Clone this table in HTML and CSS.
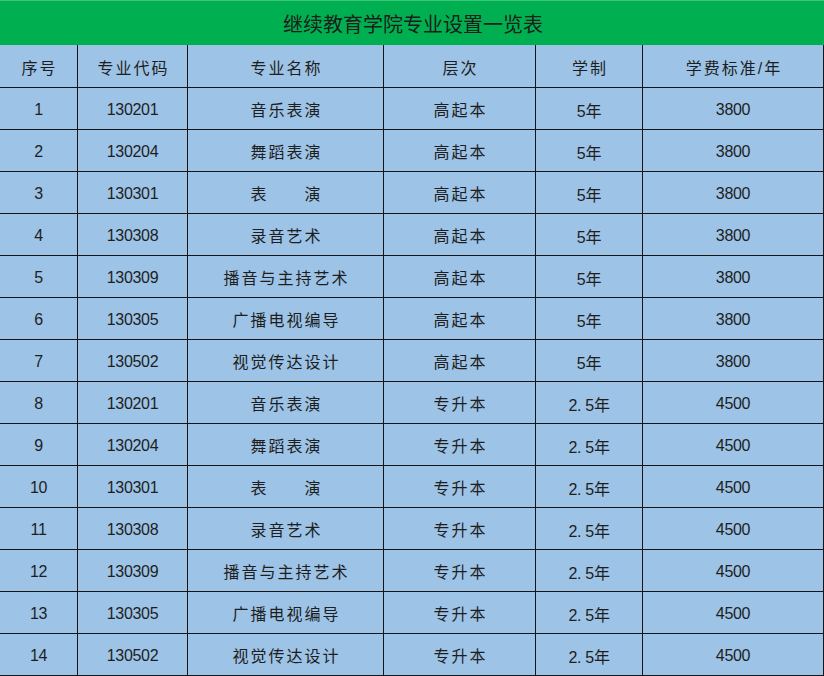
FILE: index.html
```html
<!DOCTYPE html>
<html lang="zh-CN">
<head>
<meta charset="utf-8">
<title>继续教育学院专业设置一览表</title>
<link rel="stylesheet" href="styles.css">
</head>
<body>
<div class="page">
  <div class="title">继续教育学院专业设置一览表</div>
  <div class="sheet">
    <div class="cell zh">序号</div>
    <div class="cell zh">专业代码</div>
    <div class="cell zh">专业名称</div>
    <div class="cell zh">层次</div>
    <div class="cell zh">学制</div>
    <div class="cell zh">学费标准/年</div>

    <div class="cell">1</div><div class="cell">130201</div><div class="cell zh">音乐表演</div><div class="cell zh">高起本</div><div class="cell">5年</div><div class="cell">3800</div>
    <div class="cell">2</div><div class="cell">130204</div><div class="cell zh">舞蹈表演</div><div class="cell zh">高起本</div><div class="cell">5年</div><div class="cell">3800</div>
    <div class="cell">3</div><div class="cell">130301</div><div class="cell zh">表　　演</div><div class="cell zh">高起本</div><div class="cell">5年</div><div class="cell">3800</div>
    <div class="cell">4</div><div class="cell">130308</div><div class="cell zh">录音艺术</div><div class="cell zh">高起本</div><div class="cell">5年</div><div class="cell">3800</div>
    <div class="cell">5</div><div class="cell">130309</div><div class="cell zh">播音与主持艺术</div><div class="cell zh">高起本</div><div class="cell">5年</div><div class="cell">3800</div>
    <div class="cell">6</div><div class="cell">130305</div><div class="cell zh">广播电视编导</div><div class="cell zh">高起本</div><div class="cell">5年</div><div class="cell">3800</div>
    <div class="cell">7</div><div class="cell">130502</div><div class="cell zh">视觉传达设计</div><div class="cell zh">高起本</div><div class="cell">5年</div><div class="cell">3800</div>
    <div class="cell">8</div><div class="cell">130201</div><div class="cell zh">音乐表演</div><div class="cell zh">专升本</div><div class="cell">2. 5年</div><div class="cell">4500</div>
    <div class="cell">9</div><div class="cell">130204</div><div class="cell zh">舞蹈表演</div><div class="cell zh">专升本</div><div class="cell">2. 5年</div><div class="cell">4500</div>
    <div class="cell">10</div><div class="cell">130301</div><div class="cell zh">表　　演</div><div class="cell zh">专升本</div><div class="cell">2. 5年</div><div class="cell">4500</div>
    <div class="cell">11</div><div class="cell">130308</div><div class="cell zh">录音艺术</div><div class="cell zh">专升本</div><div class="cell">2. 5年</div><div class="cell">4500</div>
    <div class="cell">12</div><div class="cell">130309</div><div class="cell zh">播音与主持艺术</div><div class="cell zh">专升本</div><div class="cell">2. 5年</div><div class="cell">4500</div>
    <div class="cell">13</div><div class="cell">130305</div><div class="cell zh">广播电视编导</div><div class="cell zh">专升本</div><div class="cell">2. 5年</div><div class="cell">4500</div>
    <div class="cell">14</div><div class="cell">130502</div><div class="cell zh">视觉传达设计</div><div class="cell zh">专升本</div><div class="cell">2. 5年</div><div class="cell">4500</div>
  </div>
</div>
</body>
</html>
```
FILE: styles.css
```css
html, body {
  margin: 0;
  padding: 0;
  background: #9dc3e6;
}
body {
  font-family: "Liberation Sans", "Noto Sans CJK SC", sans-serif;
  color: #1e1e1e;
}
.page {
  width: 824px;
  height: 676px;
  overflow: hidden;
}
.title {
  height: 45px;
  box-sizing: border-box;
  border-top: 1px solid #3cc477;
  background: #00b050;
  color: #1c1c1c;
  font-size: 20px;
  display: flex;
  align-items: center;
  justify-content: center;
  padding-left: 2px;
  padding-top: 1px;
}
.sheet {
  display: grid;
  grid-template-columns: 77px 109px 195px 151px 106px 180px;
  grid-template-rows: 42px repeat(14, 41px);
  gap: 1px;
  padding: 0 1px 1px 0;
  background: #151515;
  width: 824px;
  box-sizing: border-box;
}
.cell {
  background: #9dc3e6;
  display: flex;
  align-items: center;
  justify-content: center;
  font-size: 16px;
  letter-spacing: -0.3px;
  padding-top: 2px;
}
.zh {
  font-size: 16px;
  letter-spacing: 2px;
  padding-left: 2px;
  padding-top: 1px;
}
```
